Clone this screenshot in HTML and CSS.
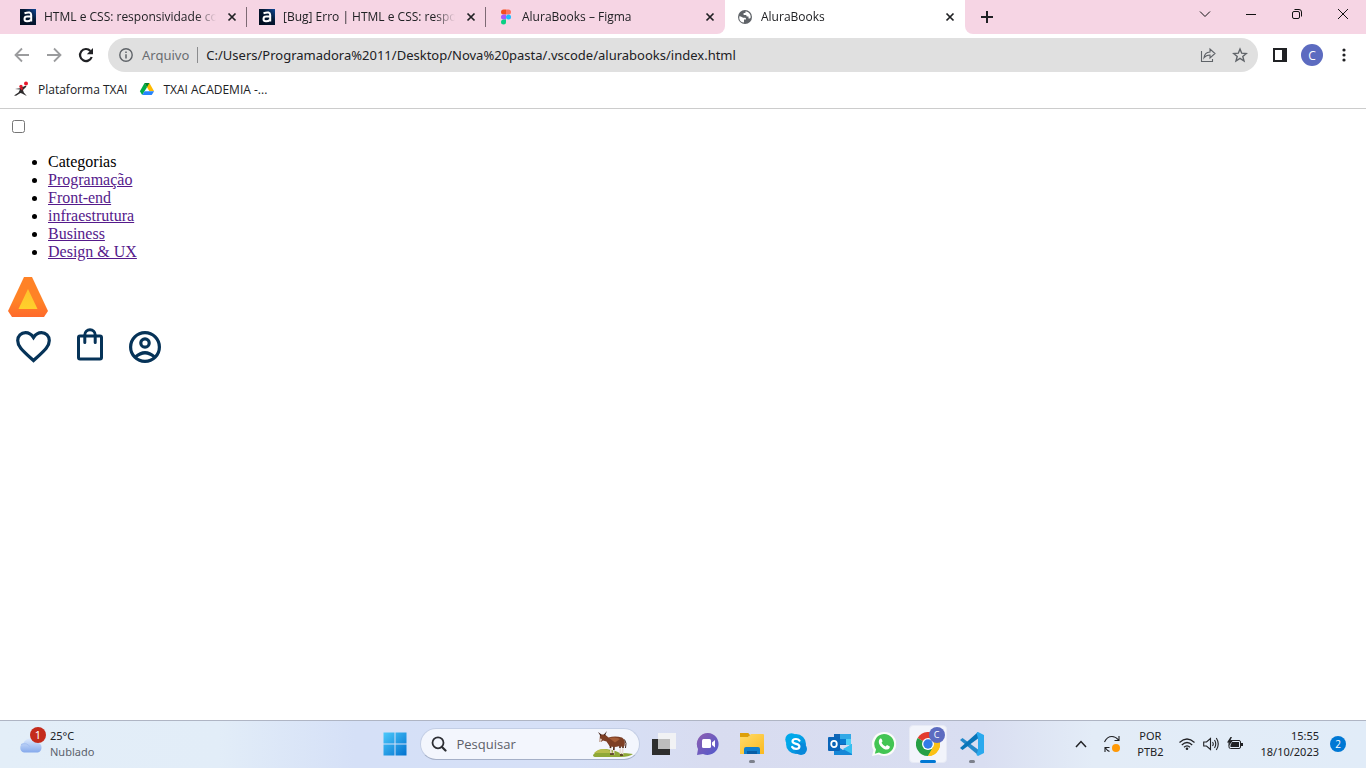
FILE: index.html
```html
<!DOCTYPE html>
<html lang="pt-BR">
<head>
<meta charset="utf-8">
<meta name="viewport" content="width=device-width, initial-scale=1">
<title>AluraBooks</title>
<link rel="stylesheet" href="styles.css">
</head>
<body>
<svg class="defs" aria-hidden="true">
  <defs>
    <linearGradient id="logoOuter" x1="0" y1="0" x2="0" y2="1"><stop offset=".6" stop-color="#ff8226"/><stop offset="1" stop-color="#ff6a2b"/></linearGradient>
    <linearGradient id="logoInner" x1="0" y1="0" x2="0" y2="1"><stop offset="0" stop-color="#ffc12c"/><stop offset="1" stop-color="#ffd02b"/></linearGradient>
    <linearGradient id="navy" x1="0" y1="1" x2="1" y2="0"><stop offset="0" stop-color="#000c1c"/><stop offset=".6" stop-color="#041833"/><stop offset="1" stop-color="#12499a"/></linearGradient>
    <linearGradient id="win" x1="0" y1="0" x2="1" y2="1"><stop offset="0" stop-color="#4cc9fb"/><stop offset="1" stop-color="#0272cf"/></linearGradient>
    <linearGradient id="cloud" x1="0" y1="0" x2="0" y2="1"><stop offset="0" stop-color="#dce9fc"/><stop offset="1" stop-color="#85a9ec"/></linearGradient>
    <linearGradient id="chat" x1="0" y1="0" x2="1" y2="1"><stop offset="0" stop-color="#8f5fb0"/><stop offset="1" stop-color="#5059cc"/></linearGradient>
    <linearGradient id="folder" x1="0" y1="0" x2="1" y2="1"><stop offset="0" stop-color="#ffdc6b"/><stop offset="1" stop-color="#fbb91f"/></linearGradient>
    <linearGradient id="skype" x1="0" y1="0" x2="1" y2="1"><stop offset="0" stop-color="#00b8f1"/><stop offset="1" stop-color="#0783d8"/></linearGradient>
    <symbol id="alura" viewBox="0 0 16 16">
      <rect width="16" height="16" fill="url(#navy)"/>
      <path d="M4.5 4.2Q11.2 2 11.2 6V12.6M11 7.6H7.2Q4.5 7.6 4.5 10Q4.5 12.3 7 12.3Q9.5 12.3 11 10.7" fill="none" stroke="#fff" stroke-width="2"/>
    </symbol>
    <symbol id="close" viewBox="0 0 10 10"><path d="M1.5 1.5L8.5 8.5M8.5 1.5L1.5 8.5" stroke="#202124" stroke-width="1.7"/></symbol>
  </defs>
</svg>

<header class="browser">
  <div class="tabstrip">
    <nav class="tabs" aria-label="Abas">
      <div class="tab">
        <svg class="favicon"><use href="#alura"/></svg>
        <span class="tab-title">HTML e CSS: responsividade com</span>
        <button class="tab-close" aria-label="Fechar aba"><svg width="10" height="10"><use href="#close"/></svg></button>
      </div>
      <div class="tab">
        <svg class="favicon"><use href="#alura"/></svg>
        <span class="tab-title">[Bug] Erro | HTML e CSS: respons</span>
        <button class="tab-close" aria-label="Fechar aba"><svg width="10" height="10"><use href="#close"/></svg></button>
      </div>
      <div class="tab last">
        <svg class="favicon" viewBox="0 0 16 16">
          <path d="M8 .5H5.500a2.500 2.500 0 0 0 0 5H8z" fill="#f24e1e"/><path d="M8 .5h2.500a2.500 2.500 0 0 1 0 5H8z" fill="#ff7262"/>
          <path d="M8 5.500H5.500a2.500 2.500 0 0 0 0 5H8z" fill="#a259ff"/><circle cx="10.500" cy="8" r="2.500" fill="#1abcfe"/>
          <path d="M8 10.500H5.500A2.500 2.500 0 1 0 8 13z" fill="#0acf83"/>
        </svg>
        <span class="tab-title">AluraBooks – Figma</span>
        <button class="tab-close" aria-label="Fechar aba"><svg width="10" height="10"><use href="#close"/></svg></button>
      </div>
      <div class="tab active">
        <svg class="favicon" viewBox="0 0 16 16">
          <circle cx="8" cy="8" r="7" fill="#5f6368"/>
          <path d="M2.3 7.2Q4 7.2 5.2 8.2Q6.2 9 8.2 8.800Q9.2 9 9 10.500H7V13.600Q3 13.300 2.300 9.500zM8.400 2.400V4H6.600V6H9.200L9.700 7.500H11.500V9.600H12.700Q13.700 9.400 13.700 8Q13.500 3.500 9.400 2.400z" fill="#fff"/>
        </svg>
        <span class="tab-title">AluraBooks</span>
        <button class="tab-close" aria-label="Fechar aba"><svg width="10" height="10"><use href="#close"/></svg></button>
      </div>
    </nav>
    <button class="new-tab" aria-label="Nova guia"><svg width="12" height="12" viewBox="0 0 12 12"><path d="M6 0V12M0 6H12" stroke="#202124" stroke-width="2"/></svg></button>
    <div class="window-controls">
      <button aria-label="Pesquisar guias"><svg width="12" height="12" viewBox="0 0 12 12"><path d="M1 3.500L6 8.500L11 3.500"/></svg></button>
      <button aria-label="Minimizar"><svg width="12" height="12" viewBox="0 0 12 12"><path d="M1 6.500H11"/></svg></button>
      <button aria-label="Restaurar"><svg width="12" height="12" viewBox="0 0 12 12"><rect x="1.500" y="3.500" width="7" height="7" rx="1.500"/><path d="M3.500 1.500H8Q10.500 1.500 10.500 4V8.500"/></svg></button>
      <button aria-label="Fechar"><svg width="12" height="12" viewBox="0 0 12 12"><path d="M1 1L11 11M11 1L1 11"/></svg></button>
    </div>
  </div>

  <div class="toolbar">
    <div class="history">
      <button aria-label="Voltar"><svg width="16" height="16" viewBox="0 0 16 16"><path d="M15 8H2M8 1.500L1.500 8L8 14.500" fill="none" stroke="#9b9c9e" stroke-width="1.800"/></svg></button>
      <button aria-label="Avançar"><svg width="16" height="16" viewBox="0 0 16 16"><path d="M1 8H14M8 1.500L14.500 8L8 14.500" fill="none" stroke="#9b9c9e" stroke-width="1.800"/></svg></button>
      <button aria-label="Recarregar"><svg width="16" height="16" viewBox="0 0 16 16"><path d="M13.700 10A6 6 0 1 1 12.400 3.900" fill="none" stroke="#202124" stroke-width="2.200"/><path d="M15 1V7.200H8.800z" fill="#202124"/></svg></button>
    </div>
    <div class="address">
      <svg width="16" height="16" viewBox="0 0 16 16"><circle cx="8" cy="8" r="6.200" fill="none" stroke="#5f6368" stroke-width="1.400"/><path d="M8 7.200V11.400M8 4.500V6" stroke="#5f6368" stroke-width="1.500"/></svg>
      <label class="scheme" for="url">Arquivo</label>
      <input id="url" class="url" type="text" value="C:/Users/Programadora%2011/Desktop/Nova%20pasta/.vscode/alurabooks/index.html">
      <button aria-label="Compartilhar"><svg width="16" height="16" viewBox="0 0 16 16"><path d="M1.500 4V14.500H12.500V12M4 10.800Q4.500 5.500 10 5V2L15 6.500L10 11V8Q6 8 4 10.800z" fill="none" stroke="#5f6368" stroke-width="1.100"/></svg></button>
      <button aria-label="Favoritar"><svg width="16" height="16" viewBox="0 0 16 16"><path d="M8 2L9.700 6.200L14.300 6.500L10.800 9.400L12 14L8 11.400L4 14L5.200 9.400L1.700 6.500L6.300 6.200z" fill="none" stroke="#5f6368" stroke-width="1.400"/></svg></button>
    </div>
    <div class="tools">
      <button aria-label="Painel lateral"><svg width="14" height="14" viewBox="0 0 14 14"><path d="M0 0H14V14H0zM2 2V12H9V2z" fill="#202124" fill-rule="evenodd"/></svg></button>
      <button class="avatar" aria-label="Perfil">C</button>
      <button aria-label="Menu"><svg width="4" height="14" viewBox="0 0 4 14"><g fill="#202124"><circle cx="2" cy="2" r="1.600"/><circle cx="2" cy="7" r="1.600"/><circle cx="2" cy="12" r="1.600"/></g></svg></button>
    </div>
  </div>

  <nav class="bookmarks" aria-label="Favoritos">
    <a href="#txai"><svg width="16" height="16" viewBox="0 0 16 16"><circle cx="12" cy="2.500" r="2" fill="#e8192c"/><circle cx="7" cy="5.500" r="1.700" fill="#e8192c"/><path d="M1 8L6 7.300L11.500 4.800L12.500 5.500L9 9L9.800 11.500L12.800 15L8 12.400L6.500 12L2 14.800L0 14.600L4.500 11.500L6 8.600z" fill="#2c2a2b"/><path d="M6 7.200L9 6.400L8.200 9.500z" fill="#e8192c"/></svg><span>Plataforma TXAI</span></a>
    <a href="#academia"><svg width="16" height="16" viewBox="-1 -1 18 18"><path d="M5.300 1.200H10.700L16 10.500H10.700z" fill="#ffba00"/><path d="M5.300 1.200L8 6.100L2.600 14.700L0 10.500z" fill="#00ac47"/><path d="M5.300 10.500H16L13.300 14.700H2.600z" fill="#2684fc"/><path d="M5.300 1.200H10.700L8 6.100z" fill="#00832d"/></svg><span>TXAI ACADEMIA -...</span></a>
  </nav>
</header>

<main class="page">
  <input type="checkbox" id="menu" class="menu-toggle" aria-label="Menu">
  <ul class="categories">
    <li>Categorias</li>
    <li><a href="#programacao">Programação</a></li>
    <li><a href="#front-end">Front-end</a></li>
    <li><a href="#infraestrutura">infraestrutura</a></li>
    <li><a href="#business">Business</a></li>
    <li><a href="#design">Design &amp; UX</a></li>
  </ul>
  <svg class="logo" width="40" height="40" viewBox="0 0 40 40" role="img" aria-label="AluraBooks">
    <path d="M16 0H24L40 34L36 40H4L0 34z" fill="url(#logoOuter)"/><path d="M20 12L29.500 32H10.500z" fill="url(#logoInner)"/>
  </svg>
  <div class="shortcuts">
    <a href="#favoritos" aria-label="Favoritos"><svg width="36" height="36" viewBox="0 0 36 36"><path d="M18.500 32.500L16 30.300C6.500 21.800 2.700 18 2.700 12.500C2.700 8 6.100 4.700 10.500 4.700C14 4.700 16.500 6.500 18.500 9.500C20.500 6.500 23 4.700 26.500 4.700C30.900 4.700 34.300 8 34.300 12.500C34.300 18 30.500 21.800 21 30.300z" fill="none" stroke="#063358" stroke-width="3.200"/></svg></a>
    <a href="#sacola" aria-label="Sacola"><svg width="36" height="36" viewBox="0 0 36 36"><g fill="none" stroke="#063358" stroke-width="3"><rect x="7.500" y="8" width="23" height="23" rx="1.500"/><path d="M13.800 14.500V7A5.200 5.200 0 0 1 24.200 7V14.500" stroke-linecap="round"/></g></svg></a>
    <a href="#perfil" aria-label="Meu perfil"><svg width="36" height="36" viewBox="0 0 36 36"><g fill="none" stroke="#063358" stroke-width="3.200"><circle cx="18" cy="19" r="14.400"/><circle cx="18" cy="15" r="4.200"/><path d="M8.500 29Q18 20.500 27.500 29"/></g></svg></a>
  </div>
</main>

<footer class="taskbar">
  <button class="weather">
    <span class="weather-icon"><svg width="26" height="18" viewBox="0 0 26 18"><path d="M6 17.500A5 5 0 0 1 5.500 8A8 8 0 0 1 19.500 7.500A5.200 5.200 0 0 1 20 17.500z" fill="url(#cloud)"/><path d="M3 9.500Q9 7 12 12" stroke="#a3bff1" fill="none"/></svg><span class="alert">1</span></span>
    <span class="weather-text"><span>25°C</span><span class="muted">Nublado</span></span>
  </button>

  <div class="apps">
    <button class="app" aria-label="Iniciar"><svg width="24" height="24" viewBox="0 0 24 24"><path d="M.5 .5H11.500V11.500H.5zM12.500 .5H23.500V11.500H12.500zM.5 12.500H11.500V23.500H.5zM12.500 12.500H23.500V23.500H12.500z" fill="url(#win)"/></svg></button>
    <label class="search">
      <svg width="16" height="16" viewBox="0 0 16 16"><circle cx="7" cy="6.800" r="5.500" fill="none" stroke="#2c2e33" stroke-width="1.800"/><path d="M11 11L14.500 14.500" stroke="#2c2e33" stroke-width="2.200" stroke-linecap="round"/></svg>
      <input type="text" placeholder="Pesquisar" aria-label="Pesquisar">
      <svg width="44" height="28" viewBox="0 0 44 28">
        <path d="M3 25Q8 18 16 19Q25 20 30 23Q37 23 43 24Q39 27 31 27H6Q3 27 3 25z" fill="#8fa838"/>
        <path d="M4 23Q10 17 18 20L24 23z" fill="#b7bd4c"/>
        <path d="M20.500 15L21 24M24 16L23.500 25M30 15L30.500 24M33 14L32.500 25" stroke="#eaddd5" stroke-width="1.600"/>
        <path d="M20.500 15V18M24 16L23.800 20M30 15V18M33 14V18M20 24H24M30 25H33" stroke="#4e2a1d" stroke-width="1.600"/>
        <path d="M10 4.500H15L18.500 7.500Q25 5.500 32 7.500Q36 10 34.500 16Q32 17.500 29.500 16Q24 18 19.500 16L16.500 11.500L13 10.500L11 12H9.500z" fill="#7d3f25"/>
        <path d="M8 2L11.500 4.500L10.500 6zM17 1L15 5.500L13.500 5z" fill="#412118"/><path d="M9.800 8.500L12 9L11 12H9.500z" fill="#d9c6ba"/><path d="M19 8Q27 6.500 30 9L25 12.500z" fill="#a65d37"/><path d="M34.500 9.500Q37 13 35.500 18" fill="none" stroke="#44251b"/>
      </svg>
    </label>
    <button class="app" aria-label="Visão de tarefas"><svg width="24" height="24" viewBox="0 0 24 24"><rect y="7" width="18" height="16" fill="#2e2e2e"/><rect x="6" y="1" width="18" height="16" fill="#f1f2f4"/><path d="M6 7H18V17H6z" fill="#bdbdbd"/></svg></button>
    <button class="app" aria-label="Chat"><svg width="24" height="24" viewBox="0 0 24 24"><path d="M12 1A11 11 0 1 1 7 22L1 23L2 17A11 11 0 0 1 12 1z" fill="url(#chat)"/><rect x="6" y="7" width="9" height="9" rx="1.500" fill="#fff"/><path d="M16 10.500L19 8V15.500L16 13z" fill="#fff"/></svg></button>
    <button class="app running" aria-label="Explorador de Arquivos"><svg width="24" height="24" viewBox="0 0 24 24"><path d="M0 1H8L10 4H0z" fill="#d99a08"/><path d="M0 5H8L11 2H23Q24 2 24 3V22H0z" fill="url(#folder)"/><path d="M0 1H8L10 3L8 5H0z" fill="#dda009"/><path d="M4 22V17Q4 15 6 15H18Q20 15 20 17V22z" fill="#107fcc"/><path d="M7 19H17V22H7z" fill="#075ea7"/></svg></button>
    <button class="app" aria-label="Skype"><svg width="24" height="24" viewBox="0 0 24 24"><circle cx="12" cy="12" r="10" fill="url(#skype)"/><circle cx="7.500" cy="7.500" r="6.200" fill="#00a8ea"/><circle cx="17" cy="17" r="6" fill="#0788da"/><path d="M15.500 8.700Q14.200 6.900 11.800 7Q8.500 7.100 8.500 9.300Q8.500 11.200 12 11.800Q15.600 12.500 15.400 14.700Q15.200 16.900 12.100 16.900Q9.200 16.900 8.100 14.900" fill="none" stroke="#fff" stroke-width="2.200" stroke-linecap="round"/></svg></button>
    <button class="app" aria-label="Outlook"><svg width="24" height="24" viewBox="0 0 24 24"><path d="M6 2H23V13H6z" fill="#1066b5"/><path d="M12 2H23V7H12z" fill="#32a9e7"/><path d="M12 7H18V12H12z" fill="#087bd0"/><path d="M18 7H23V13H18z" fill="#50d2f7"/><path d="M6 12L15 18L24 12V23H6z" fill="#1687d7"/><path d="M24 12V22L15 17z" fill="#37bff0"/><rect y="5" width="12" height="14" rx="1" fill="#0a65b8"/><ellipse cx="6" cy="12" rx="2.800" ry="3.200" fill="none" stroke="#fff" stroke-width="1.800"/></svg></button>
    <button class="app" aria-label="WhatsApp"><svg width="24" height="24" viewBox="0 0 24 24"><path d="M12 0A12 12 0 1 1 6.500 22.500L0 24L1.500 18A12 12 0 0 1 12 0z" fill="#fafcf9"/><path d="M12 2A10 10 0 1 1 7 20.600L2.800 21.700L4 17.500A10 10 0 0 1 12 2z" fill="#43c553"/><path d="M8 6.500Q9.500 6 9.900 7.500L10.500 9.200Q10.300 10 9.500 10.700Q11 13.500 13.600 14.400L15 13.100L17.800 14.500Q18 17 15 17.600Q11.500 17.500 8.500 13.900Q5.300 9.800 8 6.500z" fill="#fff"/></svg></button>
    <button class="app selected" aria-label="Google Chrome"><svg width="24" height="24" viewBox="0 0 24 24"><path d="M12 12L1.600 6A12 12 0 0 1 22.400 6z" fill="#e33b2e"/><path d="M12 12H12L22.400 6A12 12 0 0 1 12 24z" fill="#fbc116"/><path d="M12 12L17.200 15L12 24A12 12 0 0 1 1.600 6z" fill="#269f45"/><path d="M12 6H22.400A12 12 0 0 1 12 24L17.200 15z" fill="#fbc116"/><circle cx="12" cy="12" r="6" fill="#fff"/><circle cx="12" cy="12" r="4.700" fill="#327ce6"/></svg><span class="profile-badge">C</span></button>
    <button class="app running" aria-label="Visual Studio Code"><svg width="24" height="24" viewBox="0 0 24 24"><path d="M0 8L2.500 6L18 17.500V23z" fill="#2489ca"/><path d="M0 16L2.500 18L18 6.500V0z" fill="#0875b9"/><path d="M18 0L24 3V21L18 24L16.500 23L18 17.500V6.500L16.500 1z" fill="#2aa9ee"/></svg></button>
  </div>

  <div class="tray">
    <button class="chevron" aria-label="Mostrar ícones ocultos"><svg width="12" height="8" viewBox="0 0 12 8"><path d="M1 7L6 1.500L11 7" fill="none" stroke="#202124" stroke-width="1.500"/></svg></button>
    <button class="update" aria-label="Atualização"><svg width="18" height="18" viewBox="0 0 18 18"><path d="M1.500 7Q4 1.500 9 1.500Q12.500 1.500 15.500 5M16 1V5.500H11.500M2 17V12.500H6.500M2.500 13Q4 15.500 6.500 16.500" fill="none" stroke="#202124" stroke-width="1.100"/><circle cx="13" cy="13" r="4" fill="#ff9907"/></svg></button>
    <button class="stack language"><span>POR</span><span>PTB2</span></button>
    <button class="status" aria-label="Rede, volume e bateria">
      <svg width="16" height="16" viewBox="0 0 16 16"><g fill="none" stroke="#202124" stroke-width="1.200"><path d="M.5 6.500Q8-.5 15.500 6.500M2.800 9Q8 4 13.200 9M5 11.300Q8 8.500 11 11.300"/></g><circle cx="8" cy="12.800" r="1.300" fill="#202124"/></svg>
      <svg width="16" height="16" viewBox="0 0 16 16"><g fill="none" stroke="#202124" stroke-width="1.100"><path d="M.7 6H3.500L7.500 2.500V13.500L3.500 10H.7zM9.500 6Q11 8 9.500 10M11.500 4Q14 8 11.500 12M13.300 2Q17.200 8 13.300 14"/></g></svg>
      <svg width="16" height="16" viewBox="0 0 16 16"><rect x="2" y="4.500" width="11.500" height="8" rx="1.500" fill="none" stroke="#202124"/><path d="M5 6H12V11H3.500V9zM14 7H16V10H14z" fill="#202124"/><path d="M3.500 1L0 6.500H2.500L1.500 10L6 4.500H3.300L5 1z" fill="#202124"/></svg>
    </button>
    <button class="stack clock"><span>15:55</span><span>18/10/2023</span></button>
    <span class="count">2</span>
  </div>
</footer>
</body>
</html>
```
FILE: styles.css
```css
* { box-sizing: border-box; }

body {
  margin: 0;
  min-height: 100vh;
  display: flex;
  flex-direction: column;
  background: #fff;
  color: #000;
}

button {
  display: flex;
  align-items: center;
  justify-content: center;
  padding: 0;
  border: 0;
  background: none;
  color: inherit;
  font: inherit;
}

svg { flex: none; display: block; }
.defs { position: absolute; width: 0; height: 0; }

.browser, .taskbar { font-family: "Open Sans", "Noto Sans", sans-serif; font-size: 12px; color: #202124; }
.browser { border-bottom: 1px solid #ccc; }

.tabstrip { display: flex; height: 34px; padding-left: 8px; background: #f6d5e4; }
.tabs { position: relative; z-index: 1; display: flex; min-width: 0; background: linear-gradient(90deg, #f6d5e4 50%, #fff 50%); }
.tab {
  display: flex;
  align-items: center;
  width: 239px;
  min-width: 0;
  padding: 0 5px 0 12px;
  background: linear-gradient(#7d6a74, #7d6a74) right 0 center / 1px 20px no-repeat;
}
.tab.last { background: #f6d5e4; border-radius: 0 0 8px 0; }
.tab.active { width: 240px; background: #fff; border-radius: 8px 8px 0 0; }
.favicon { width: 16px; height: 16px; }
.tab-title {
  flex: 1;
  min-width: 0;
  margin: 0 6px 0 8px;
  overflow: hidden;
  white-space: nowrap;
  line-height: 18px;
  -webkit-mask-image: linear-gradient(90deg, #000 calc(100% - 20px), transparent);
  mask-image: linear-gradient(90deg, #000 calc(100% - 20px), transparent);
}
.tab-close { width: 20px; height: 20px; }
.new-tab { width: 44px; background: #f6d5e4; border-radius: 0 0 0 8px; box-shadow: -8px 8px 0 0 #fff; clip-path: inset(0 0 0 -8px); }
.window-controls { display: flex; margin-left: auto; }
.window-controls button { width: 46px; height: 28px; }
.window-controls path, .window-controls rect { fill: none; stroke: #111; stroke-width: 1; }

.toolbar { display: flex; align-items: center; height: 42px; padding: 0 15px 0 14px; }
.history { display: flex; gap: 16px; margin-right: 14px; }
.address {
  flex: 1;
  min-width: 0;
  display: flex;
  align-items: center;
  height: 34px;
  padding: 0 2px 0 10px;
  border-radius: 17px;
  background: #e0e0e0;
  font-family: "Noto Sans", "Open Sans", sans-serif;
  font-size: 13px;
}
.address button { width: 32px; height: 32px; }
.scheme { margin: 0 8px; padding-right: 8px; border-right: 1px solid #8b8c8e; color: #6a6d71; line-height: 16px; }
.url { flex: 1; min-width: 0; padding: 0; border: 0; background: none; color: #202124; font: inherit; outline: 0; }
.tools { display: flex; align-items: center; gap: 14px; margin-left: 15px; }
.tools button { min-width: 14px; }
.tools .avatar { width: 22px; height: 22px; border-radius: 50%; background: #5c6bc0; color: #fff; }

.bookmarks { display: flex; gap: 12px; height: 32px; padding: 0 14px 6px; align-items: center; }
.bookmarks a { display: flex; align-items: center; gap: 8px; color: inherit; text-decoration: none; }

.page { flex: 1; padding: 8px; font-family: "Liberation Serif", serif; font-size: 16px; line-height: 18px; }
.menu-toggle { display: block; margin: 3px 3px 20px 4px; }
.categories { margin: 0 0 16px; padding-left: 40px; }
.categories a { color: #551a8b; }
.shortcuts { display: flex; gap: 20px; padding: 11px 0 0 7px; }

.taskbar {
  display: grid;
  grid-template-columns: 1fr auto 1fr;
  align-items: center;
  height: 48px;
  padding-bottom: 2px;
  border-top: 1px solid #afb5c4;
  background: linear-gradient(90deg, #e3eef8 0, #e2edf8 16%, #d5e0f7 26%, #d6e0f7 42%, #d8dcf0 52%, #d9def1 72%, #e3ecf7 80%, #e1ecf8 100%);
}
.weather { justify-self: start; padding-left: 18px; gap: 4px; text-align: left; }
.weather-icon { position: relative; width: 28px; height: 34px; display: flex; align-items: center; }
.alert {
  position: absolute;
  top: 0;
  right: 0;
  width: 16px;
  height: 16px;
  border-radius: 50%;
  background: #c42b1c;
  color: #fff;
  line-height: 16px;
  text-align: center;
}
.weather-text, .stack { display: flex; flex-direction: column; line-height: 16px; }
.weather-text, .stack, .alert { font-family: "Noto Sans", "Open Sans", sans-serif; font-size: 11px; }
.muted { color: #5b626c; }

.apps { display: flex; align-items: center; }
.app { position: relative; width: 44px; height: 38px; }
.search {
  display: flex;
  align-items: center;
  width: 220px;
  height: 32px;
  margin: 0 2px 0 3px;
  padding: 0 5px 0 10px;
  border: 1px solid #c3cee5;
  border-bottom-color: #a5b0c8;
  border-radius: 16px;
  background: #f3f6fd;
}
.search input {
  flex: 1;
  min-width: 0;
  margin-left: 10px;
  padding: 0;
  border: 0;
  background: none;
  font: inherit;
  font-size: 13px;
  outline: 0;
}
.search input::placeholder { color: #5d6068; opacity: 1; }
.running::after, .selected::after {
  content: "";
  position: absolute;
  left: 50%;
  bottom: 0;
  width: 6px;
  height: 3px;
  margin-left: -3px;
  border-radius: 2px;
  background: #7c808b;
}
.selected::before { content: ""; position: absolute; inset: 0 3px; border: 1px solid #e7eaf5; border-radius: 4px; background: #f2f4fb; }
.selected svg { position: relative; }
.selected::after { width: 16px; margin-left: -8px; background: #0078d4; }
.profile-badge {
  position: absolute;
  top: 2px;
  right: 5px;
  width: 16px;
  height: 16px;
  border-radius: 50%;
  background: #5c6bc0;
  color: #fff;
  font-size: 9px;
  line-height: 16px;
  text-align: center;
}

.tray { display: flex; align-items: center; justify-self: end; padding-right: 20px; }
.update { margin: 0 16px; }
.status { gap: 8px; margin: 0 17px 0 16px; }
.clock { align-items: flex-end; }
.count {
  width: 16px;
  height: 16px;
  margin-left: 11px;
  border-radius: 50%;
  background: #0078d4;
  color: #fff;
  font-size: 10px;
  line-height: 16px;
  text-align: center;
}
```
